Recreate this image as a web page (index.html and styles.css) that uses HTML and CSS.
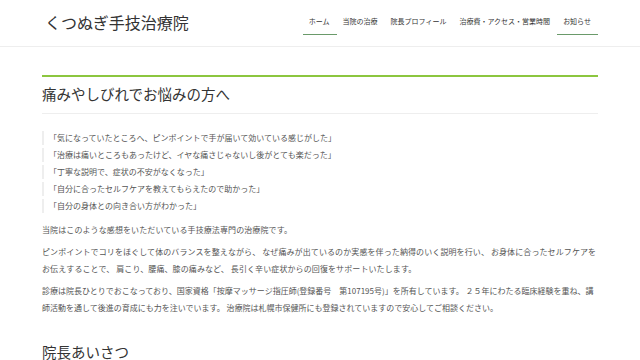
FILE: index.html
```html
<!DOCTYPE html>
<html lang="ja">
<head>
    <meta charset="UTF-8">
    <meta name="viewport" content="width=device-width, initial-scale=1.0">
    <title>くつぬぎ手技治療院</title>
    <link rel="stylesheet" href="styles.css">
</head>
<body>
    <header class="site-header">
        <div class="container header-inner">
            <h1 class="site-title">くつぬぎ手技治療院</h1>
            <nav>
                <ul class="nav">
                    <li class="active"><a href="#">ホーム</a></li>
                    <li><a href="#">当院の治療</a></li>
                    <li><a href="#">院長プロフィール</a></li>
                    <li><a href="#">治療費・アクセス・営業時間</a></li>
                    <li class="active"><a href="#">お知らせ</a></li>
                </ul>
            </nav>
        </div>
    </header>

    <main class="container content">
        <h2 class="section-title">痛みやしびれでお悩みの方へ</h2>
        <ul class="voices">
            <li>「気になっていたところへ、ピンポイントで手が届いて効いている感じがした」</li>
            <li>「治療は痛いところもあったけど、イヤな痛さじゃないし後がとても楽だった」</li>
            <li>「丁寧な説明で、症状の不安がなくなった」</li>
            <li>「自分に合ったセルフケアを教えてもらえたので助かった」</li>
            <li>「自分の身体との向き合い方がわかった」</li>
        </ul>
        <p>当院はこのような感想をいただいている手技療法専門の治療院です。</p>
        <p>ピンポイントでコリをほぐして体のバランスを整えながら、 なぜ痛みが出ているのか実感を伴った納得のいく説明を行い、 お身体に合ったセルフケアをお伝えすることで、 肩こり、腰痛、膝の痛みなど、 長引く辛い症状からの回復をサポートいたします。</p>
        <p class="tight">診療は院長ひとりでおこなっており、国家資格「按摩マッサージ指圧師(登録番号　第107195号)」を所有しています。 ２５年にわたる臨床経験を重ね、講師活動を通して後進の育成にも力を注いでいます。 治療院は札幌市保健所にも登録されていますので安心してご相談ください。</p>

        <h2 class="section-title plain">院長あいさつ</h2>
    </main>
</body>
</html>
```

FILE: styles.css
```css
body {
    font-family: "Noto Sans CJK JP", "Noto Sans", sans-serif;
    background-color: #fff;
    color: #555;
    margin: 0;
}
.container {
    width: 556px;
    margin: 0 auto;
}
.site-header {
    border-bottom: 1px solid #eee;
}
.header-inner {
    display: flex;
    justify-content: space-between;
    align-items: center;
    height: 46px;
}
.site-title {
    margin: 0 0 2px 3px;
    font-size: 16px;
    font-weight: normal;
    color: #333;
}
.nav {
    display: flex;
    list-style: none;
    margin: 0;
    padding: 0;
}
.nav li {
    padding: 0 7px 0 6px;
    border-bottom: 1px solid transparent;
}
.nav li.active {
    border-bottom-color: #6a9a6a;
}
.nav a {
    display: block;
    font-size: 7px;
    line-height: 20px;
    padding-bottom: 3px;
    color: #333;
    text-decoration: none;
}
.content {
    margin-top: 28px;
    border-top: 2px solid #8cc63f;
}
.section-title {
    margin: 0;
    padding: 7px 0 9px;
    font-size: 14.5px;
    line-height: 20px;
    font-weight: normal;
    color: #333;
    border-bottom: 1px solid #eee;
}
.section-title.plain {
    margin-top: 22px;
    padding-top: 4px;
    border-bottom: none;
}
.voices {
    list-style: none;
    margin: 17px 0 8px;
    padding: 0;
}
.voices li {
    font-size: 8px;
    line-height: 14px;
    margin-bottom: 3px;
    padding-left: 5px;
    border-left: 2px solid #eee;
}
p {
    font-size: 8px;
    line-height: 17px;
    letter-spacing: 0.1px;
    margin: 0 0 5px;
}
p.tight {
    letter-spacing: 0;
}
```
